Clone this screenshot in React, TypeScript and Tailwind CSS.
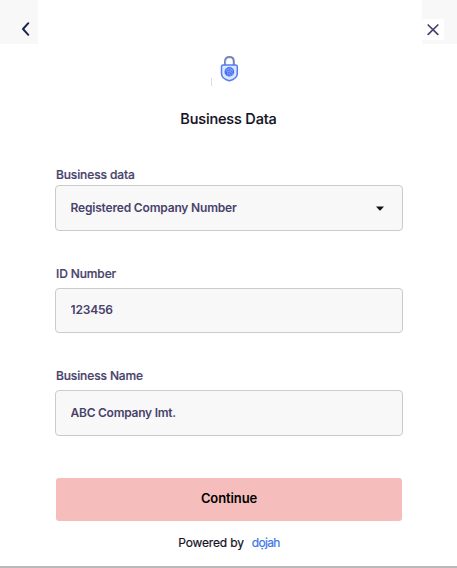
import { useState } from 'react';

const labelClass =
  'block pl-px h-5 text-[12px] leading-5 font-medium tracking-[-0.12px] text-[#48426b] [-webkit-text-stroke:0.2px]';
const fieldClass =
  'w-full rounded-[4px] border border-[#cbcbcd] bg-[#f8f8f8] px-[14.5px] text-[12px] font-semibold tracking-[-0.18px] text-[#48426b] outline-none';

function LockLogo() {
  return (
    <svg width="20" height="28" viewBox="0 0 20 28" fill="none" aria-hidden="true">
      <path d="M6 10.5V6.4C6 3.7 7.5 2 10.3 2s4.5 1.7 4.5 4.4v4.1" stroke="#6f86b5" strokeWidth="2" />
      <path d="M6.8 10V7c0-2.3 1.3-3.9 3.5-3.9" stroke="#b9c8ea" strokeWidth="0.7" />
      <path
        d="M4.2 9.9h12.4c1 0 1.7.7 1.7 1.7v6.8c0 3.9-3.2 6-7.9 7.4-4.7-1.4-7.9-3.5-7.9-7.4v-6.8c0-1 .7-1.7 1.7-1.7Z"
        fill="#dce6ff"
        stroke="#527cf5"
        strokeWidth="1.5"
      />
      <circle cx="10.4" cy="16.8" r="5" fill="#86a4f6" />
      <path
        d="M6.7 19.3c-1.3-3.6.7-6.5 3.7-6.5s4.7 2.7 3.8 5.5M8 20.5c-1.2-3.2-.4-5.6 2.3-5.6s3.5 2.7 2.1 5.6M9.5 21.2c-.7-2.1-.7-4.2.8-4.2s1.2 2.2.2 4.2"
        stroke="#315ff0"
        strokeWidth="0.9"
      />
    </svg>
  );
}

export default function App() {
  const [idNumber, setIdNumber] = useState('123456');
  const [businessName, setBusinessName] = useState('ABC Company Imt.');

  return (
    <main className="flex h-[568px] w-[457px] flex-col border-b-2 border-[#b9b9b9] bg-white font-['Inter',sans-serif]">
      <header className="flex h-11 shrink-0 justify-between">
        <button aria-label="Back" className="flex w-[38px] justify-end bg-[#f8f8f8] pt-[21px] pr-2">
          <svg width="9" height="16" viewBox="0 0 9 16" fill="none">
            <path d="M7.3 2.2 2 8l5.3 5.8" stroke="#1c2454" strokeWidth="2" strokeLinecap="round" strokeLinejoin="round" />
          </svg>
        </button>
        <div className="w-[35px] bg-[#f8f8f8] pt-[19px]">
          <button aria-label="Close" className="flex h-[21px] w-[22px] items-center justify-center rounded-[3px] bg-white">
            <svg width="12" height="12" viewBox="0 0 12 12" fill="none">
              <path d="m1.2 1 9.6 9.4m0-9.4-9.6 9.4" stroke="#48426b" strokeWidth="1.7" strokeLinecap="round" />
            </svg>
          </button>
        </div>
      </header>

      <div className="flex h-[54px] items-start pt-[11px] pl-[211px]">
        <span className="mt-[23px] h-2 w-px bg-[#dedee2]" />
        <span className="ml-[7px]">
          <LockLogo />
        </span>
      </div>

      <h1 className="mt-[9px] h-6 text-center text-[14.5px] leading-6 font-medium tracking-[-0.15px] text-[#14121f] [-webkit-text-stroke:0.15px]">
        Business Data
      </h1>

      <form className="mt-[34px] pr-[54px] pl-[55px]" onSubmit={(e) => e.preventDefault()}>
        <label className={labelClass}>Business data</label>
        <button type="button" className={`${fieldClass} flex h-[46px] items-center justify-between`}>
          <span>Registered Company Number</span>
          <svg width="8" height="5" viewBox="0 0 8 5" className="mr-[3.5px]">
            <path d="M0 .5h8L4.6 4.2q-.6.5-1.2 0Z" fill="#14121f" />
          </svg>
        </button>

        <label htmlFor="id-number" className={`${labelClass} mt-[33px]`}>
          ID Number
        </label>
        <input
          id="id-number"
          value={idNumber}
          onChange={(e) => setIdNumber(e.target.value)}
          className={`${fieldClass} mt-1 block h-[45px] pb-0.5 tracking-[-0.4px]`}
        />

        <label htmlFor="business-name" className={`${labelClass} mt-[33px]`}>
          Business Name
        </label>
        <input
          id="business-name"
          value={businessName}
          onChange={(e) => setBusinessName(e.target.value)}
          className={`${fieldClass} mt-1 block h-[46px] pb-0.5 tracking-[-0.25px]`}
        />

        <div className="mt-[42px] px-px">
          <button className="h-[43px] w-full rounded-[3px] bg-[#f5bebd] pb-0.5 text-[13px] font-semibold tracking-[-0.1px] text-black">
            Continue
          </button>
        </div>
      </form>

      <footer className="mt-[12px] flex h-5 justify-center gap-2 pl-px text-[12px] leading-5 text-[#14121f]">
        <span className="tracking-[-0.15px] [-webkit-text-stroke:0.2px]">Powered by</span>
        <span className="tracking-[-0.65px] text-[#3b76e8] [-webkit-text-stroke:0.2px]">dọjah</span>
      </footer>
    </main>
  );
}
